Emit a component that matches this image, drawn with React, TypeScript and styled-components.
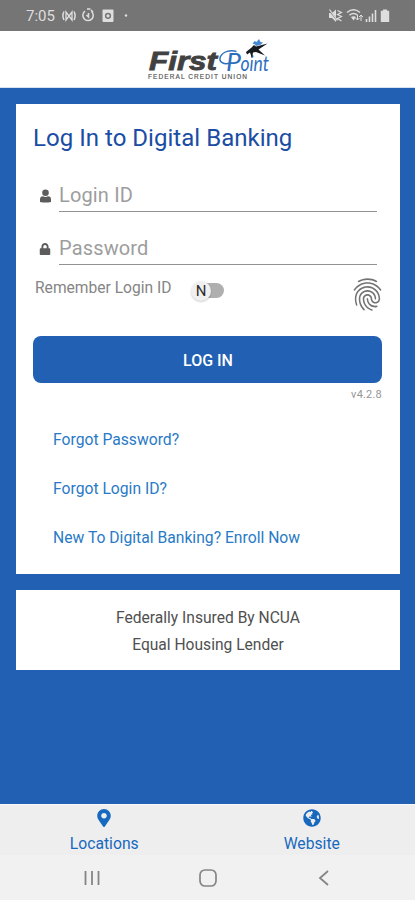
import React from "react";
import styled, { createGlobalStyle } from "styled-components";
import { MdFingerprint } from "react-icons/md";
import { FaLock, FaMapMarkerAlt, FaGlobeAmericas } from "react-icons/fa";

const GlobalStyle = createGlobalStyle`
  * { box-sizing: border-box; }
  body { margin: 0; background: #2160b3; }
`;

const Screen = styled.div`
  display: flex;
  flex-direction: column;
  width: 415px;
  height: 900px;
  overflow: hidden;
  background: #2160b3;
  font-family: Roboto, "Liberation Sans", sans-serif;
`;

const StatusBar = styled.header`
  display: flex;
  flex: none;
  align-items: center;
  justify-content: space-between;
  height: 31px;
  padding: 1px 24px 0 26px;
  background: #757575;
  color: #dedede;
`;

const StatusGroup = styled.div`
  display: flex;
  align-items: center;
`;

const Clock = styled.span`
  width: 36px;
  font-size: 15px;
  line-height: 18px;
`;

const Brand = styled.div`
  display: flex;
  flex: none;
  justify-content: center;
  height: 57px;
  background: #fff;
  border-bottom: 1px solid #d5e1f1;
`;

const Content = styled.main`
  display: flex;
  flex: 1;
  flex-direction: column;
  gap: 16px;
  padding: 16px 15px 0 16px;
`;

const LoginCard = styled.form`
  display: flex;
  flex: none;
  flex-direction: column;
  height: 470px;
  padding: 17px 17px 0;
  background: #fff;
`;

const Title = styled.h1`
  margin: 0 0 24px;
  color: #1a4da3;
  font-size: 24px;
  font-weight: 400;
  line-height: 34px;
  letter-spacing: 0.03px;
  white-space: nowrap;
`;

const Field = styled.label`
  display: flex;
  align-items: center;
  height: 33px;
  margin: 0 6px 20px 0;
  color: #5c5c5c;
`;

const FieldIcon = styled.span`
  display: flex;
  justify-content: center;
  width: 26px;
  padding: 0 2px 0 0;
`;

const Input = styled.input`
  flex: 1;
  min-width: 0;
  height: 33px;
  padding: 0;
  border: 0;
  border-bottom: 1px solid #929292;
  outline: 0;
  background: none;
  font: 400 20px Roboto, sans-serif;
  letter-spacing: 0.15px;

  &::placeholder { color: #9d9d9d; opacity: 1; }
`;

const RememberRow = styled.div`
  display: flex;
  align-items: flex-start;
  height: 50px;
  margin-top: -8px;
  padding-left: 2px;
  color: #858585;
`;

const RememberLabel = styled.span`
  width: 156px;
  padding-top: 1px;
  font-size: 15.6px;
  line-height: 20px;
  white-space: nowrap;
`;

const Switch = styled.span`
  display: flex;
  align-items: center;
  width: 33px;
  height: 15px;
  margin-top: 6px;
  border-radius: 8px;
  background: linear-gradient(90deg, transparent 10px, #afafaf 10px);
`;

const Knob = styled.span`
  display: flex;
  align-items: center;
  justify-content: center;
  flex: none;
  width: 20px;
  height: 20px;
  border-radius: 50%;
  background: #f0f0f0;
  box-shadow: 0 1px 2px #0003;
  color: #2c2c2c;
  font-size: 15px;
`;

const Fingerprint = styled(MdFingerprint).attrs({ preserveAspectRatio: "none" })`
  flex: none;
  width: 37px;
  height: 39px;
  margin: -2px -3px 0 auto;
  color: #747474;
`;

const LoginButton = styled.button`
  flex: none;
  width: 349px;
  height: 47px;
  margin-top: 9px;
  padding: 1px 0 0 1px;
  border: 0;
  border-radius: 8px;
  background: #2160b3;
  color: #fff;
  font: 500 16px Roboto, sans-serif;
`;

const Version = styled.div`
  padding: 5px 1px 0 0;
  color: #969696;
  font-size: 11px;
  line-height: 14px;
  letter-spacing: 0.2px;
  text-align: right;
`;

const Links = styled.nav`
  display: flex;
  flex-direction: column;
  gap: 29px;
  padding: 28px 0 0 20px;
`;

const TextLink = styled.a`
  color: #297ac6;
  font-size: 15.7px;
  line-height: 20px;
  white-space: nowrap;
`;

const Notice = styled.section`
  flex: none;
  height: 80px;
  padding: 15px 0 0;
  background: #fff;
  color: #505050;
  font-size: 15.6px;
  line-height: 26.5px;
  text-align: center;
`;

const Tabs = styled.nav`
  display: grid;
  flex: none;
  grid-template-columns: 1fr 1fr;
  height: 51px;
  border-top: 1px solid #fafafa;
  background: #eee;
`;

const Tab = styled.a`
  display: flex;
  flex-direction: column;
  align-items: center;
  gap: 7px;
  padding: 4px 0 0 1px;
  color: #1769bf;
  font-size: 15.7px;
  line-height: 20px;
`;

const SystemNav = styled.footer`
  display: grid;
  flex: none;
  grid-template-columns: repeat(3, 116px);
  justify-content: center;
  align-items: center;
  justify-items: center;
  height: 45px;
  background: #f1f1f1;
`;

const StatusIcons = () => (
  <svg width="68" height="18" viewBox="62 7 68 18" fill="none" stroke="currentColor" strokeWidth="1.5">
    <path d="M64 11.5c-1.3 2.5-1.3 6 0 8.5M74 11.5c1.3 2.5 1.3 6 0 8.5" />
    <path d="M66 12v8l6-8v8z" strokeWidth="1.3" />
    <path d="M85 11.2A5.2 5.2 0 1 0 91.5 11.5" />
    <path d="M88.5 13v4l-2-2M87 9h3.5M91 10l2 2" />
    <rect x="102.5" y="9.5" width="11" height="12.5" rx="1" fill="currentColor" stroke="none" />
    <circle cx="108" cy="15.8" r="2.4" stroke="#757575" />
    <circle cx="126" cy="15.5" r="1.2" fill="currentColor" stroke="none" />
  </svg>
);

const SignalIcons = () => (
  <svg width="63" height="18" viewBox="328 7 63 18" fill="none" stroke="currentColor" strokeWidth="1.5">
    <path d="M329 13h3l4-3.5V22l-4-4h-3z" fill="currentColor" stroke="none" />
    <path d="M329 10l9 11" stroke="#757575" />
    <path d="M337.5 10.5l4 2-4 2 4 2-4 2 4 2.5M329.5 9.5l8 11" strokeWidth="1.2" />
    <path d="M347 12.5c4-3.3 9-3.3 13 0M349.5 15.2c2.5-2 5.5-2 8 0" />
    <path d="M351 17q2.5-1.5 5 0l-2.5 3.5z" fill="currentColor" stroke="none" />
    <path d="M357.5 20v-5M355.5 18l2 2 2-2M361 15v6M359 17l2-2 2 2" strokeWidth="1" />
    <path d="M366.5 19v3M369.5 16.5V22M372.5 13.5V22M375.5 10v12" strokeWidth="1.6" />
    <path d="M383 9.5h4v1.3h2.2V22h-8.4V10.8h2.2z" fill="currentColor" stroke="none" />
  </svg>
);

const Logo = () => (
  <svg width="135" height="54" viewBox="140 31 135 54" role="img" aria-label="First Point Federal Credit Union">
    <text x="149" y="70" textLength="68" lengthAdjust="spacingAndGlyphs" fontFamily="Liberation Sans" fontWeight="700" fontStyle="italic" fontSize="25" fill="#414141" stroke="#414141" strokeWidth=".8">First</text>
    <text x="148" y="79.3" textLength="99" lengthAdjust="spacing" fontFamily="Liberation Sans" fontSize="6.5" fill="#505050" stroke="#505050" strokeWidth=".15">FEDERAL CREDIT UNION</text>
    <g fill="#2e6fbd" fontFamily="Lato" fontStyle="italic">
      <text x="226" y="70.5" fontSize="26" textLength="15" lengthAdjust="spacingAndGlyphs">P</text>
      <text x="240.5" y="70.5" fontSize="21" textLength="28.5" lengthAdjust="spacingAndGlyphs">oint</text>
    </g>
    <path d="M230 63c-6 2-12-1-9.5-6.500 2.500-5 10-7 16-5" fill="none" stroke="#2e6fbd" strokeWidth="1.5" />
    <path d="M246 52l5-4 3-3 2 1.5 11.500-3-9 6 6.500 6-9-3.500-3 .5-1 6-2-6-3 2z" fill="#171b20" />
    <path d="M252.5 44l2-3 2 1 2.500-3 1.500 3 2.500 .5-2 2-5 1.500-1.500-2z" fill="#4589d0" />
  </svg>
);

const UserIcon = () => (
  <svg width="13" height="14" viewBox="0 0 13 14" fill="currentColor">
    <circle cx="6.5" cy="3.8" r="3.3" />
    <path d="M1 13V10.5Q1 7.3 4 7.3q2.5 1.4 5 0 3 0 3 3.2V13q-5.500 1-11 0z" />
  </svg>
);

export default function App() {
  return (
    <>
      <GlobalStyle />
      <Screen>
        <StatusBar>
          <StatusGroup><Clock>7:05</Clock><StatusIcons /></StatusGroup>
          <SignalIcons />
        </StatusBar>
        <Brand><Logo /></Brand>
        <Content>
          <LoginCard>
            <Title>Log In to Digital Banking</Title>
            <Field><FieldIcon><UserIcon /></FieldIcon><Input placeholder="Login ID" /></Field>
            <Field><FieldIcon><FaLock size={12} /></FieldIcon><Input type="password" placeholder="Password" /></Field>
            <RememberRow>
              <RememberLabel>Remember Login ID</RememberLabel>
              <Switch><Knob>N</Knob></Switch>
              <Fingerprint />
            </RememberRow>
            <LoginButton type="button">LOG IN</LoginButton>
            <Version>v4.2.8</Version>
            <Links>
              <TextLink>Forgot Password?</TextLink>
              <TextLink>Forgot Login ID?</TextLink>
              <TextLink>New To Digital Banking? Enroll Now</TextLink>
            </Links>
          </LoginCard>
          <Notice>
            <div>Federally Insured By NCUA</div>
            <div>Equal Housing Lender</div>
          </Notice>
        </Content>
        <Tabs>
          <Tab><FaMapMarkerAlt size={18} />Locations</Tab>
          <Tab><FaGlobeAmericas size={18} />Website</Tab>
        </Tabs>
        <SystemNav>
          <svg width="18" height="18" viewBox="0 0 18 18" stroke="#858585" strokeWidth="1.8"><path d="M2.5 2v14M9 2v14M15.500 2v14" /></svg>
          <svg width="20" height="20" viewBox="0 0 20 20" fill="none" stroke="#858585" strokeWidth="1.7"><rect x="2" y="2" width="16" height="16" rx="5" /></svg>
          <svg width="18" height="18" viewBox="0 0 18 18" fill="none" stroke="#858585" strokeWidth="1.8"><path d="M13 2L5 9l8 7" /></svg>
        </SystemNav>
      </Screen>
    </>
  );
}
